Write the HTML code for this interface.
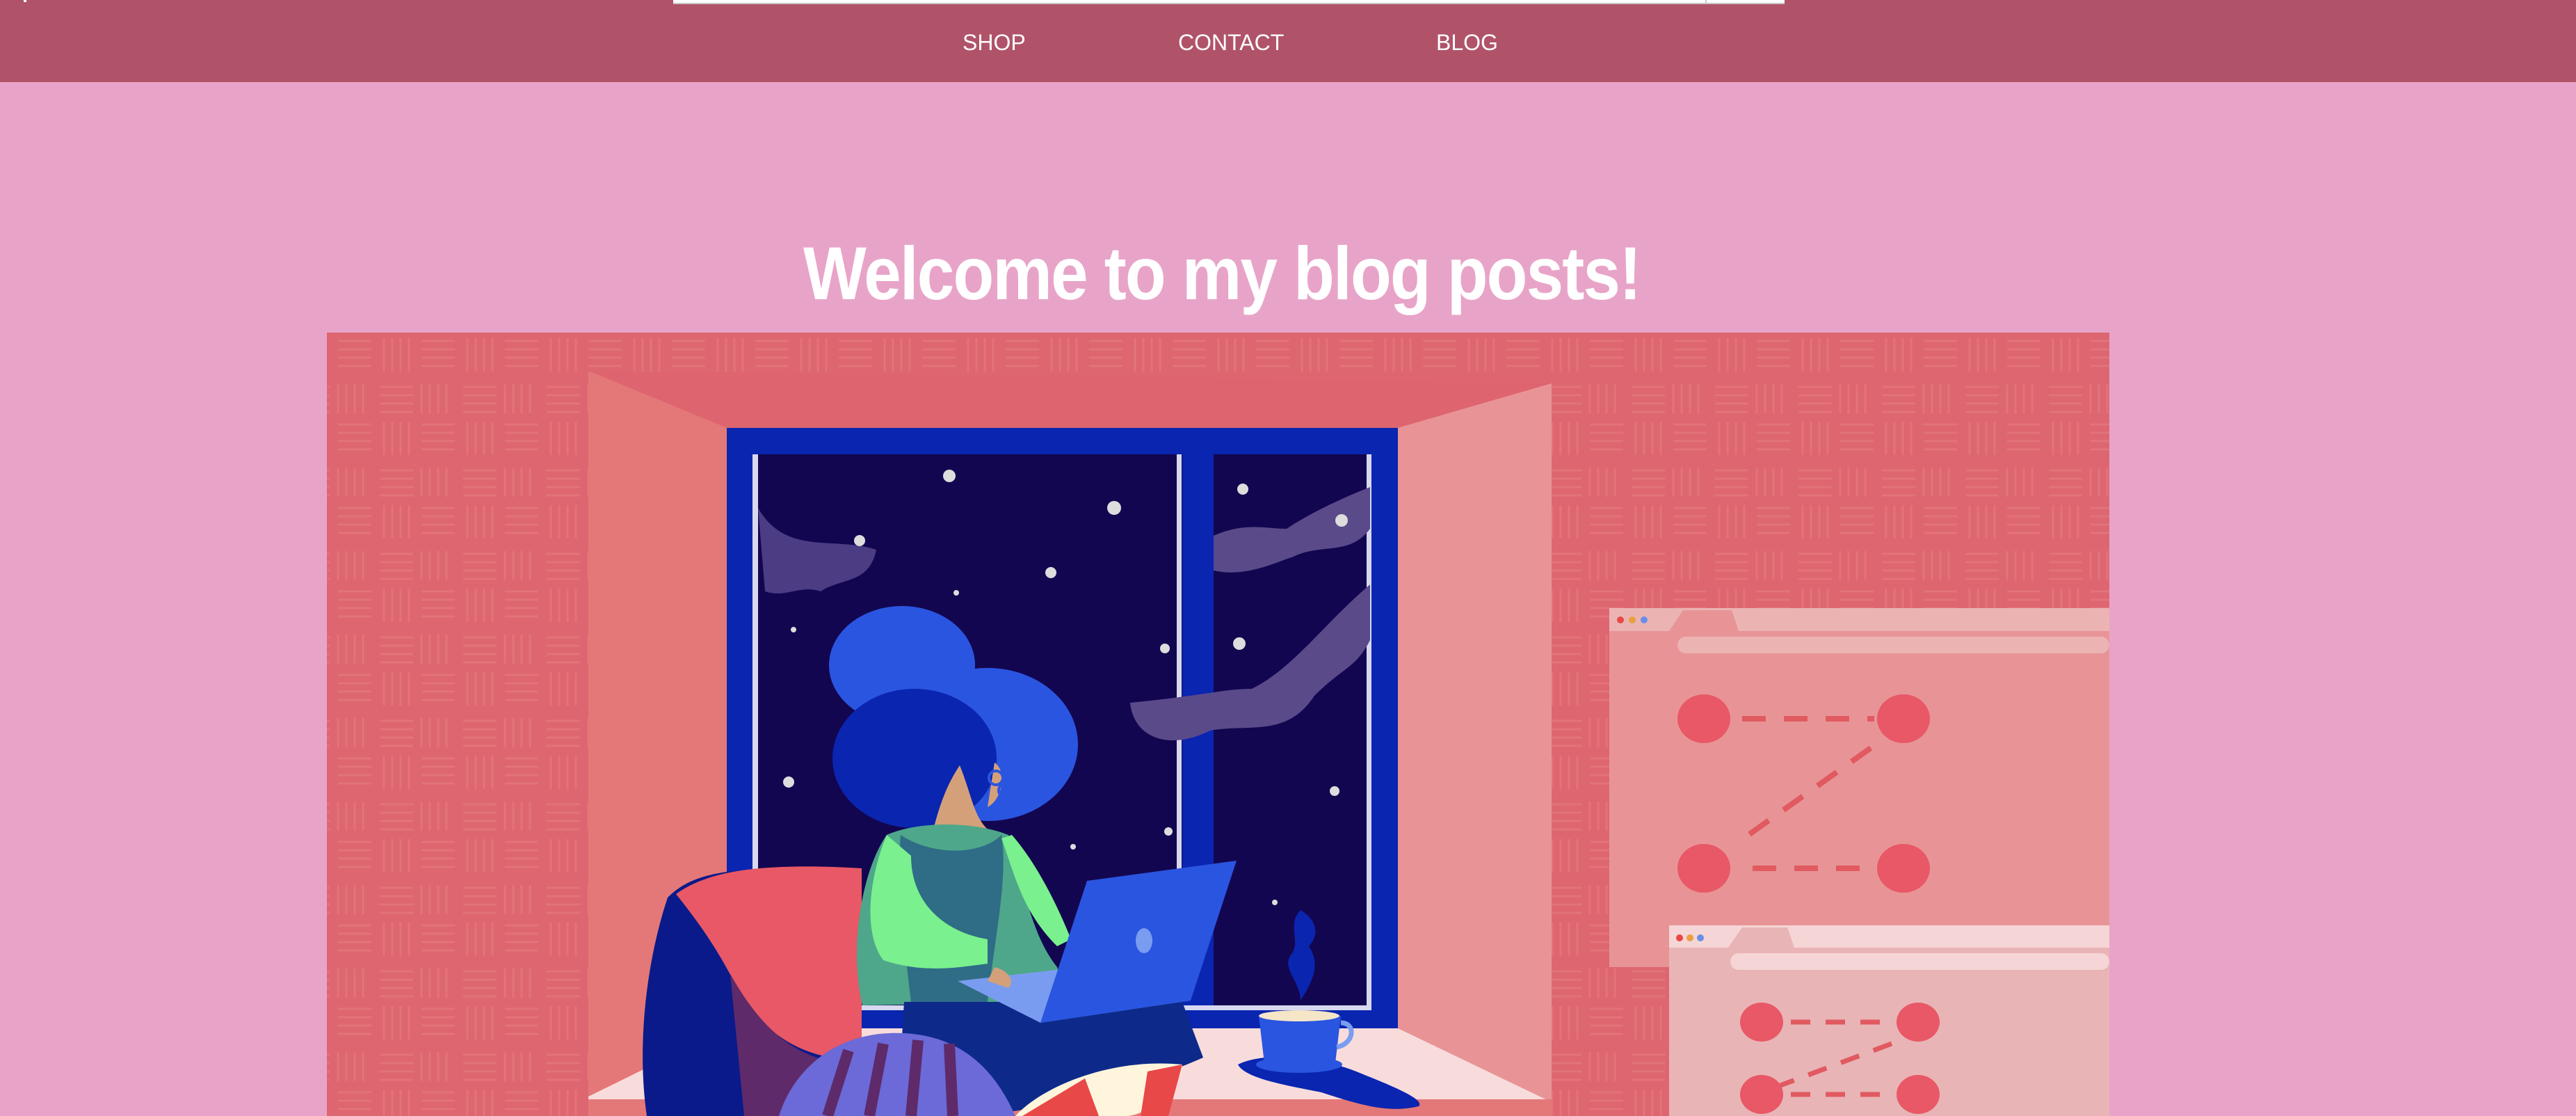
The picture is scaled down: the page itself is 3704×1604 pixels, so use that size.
<!DOCTYPE html>
<html><head><meta charset="utf-8"><style>
html,body{margin:0;padding:0;width:3704px;height:1604px;overflow:hidden;background:#e8a4c8;font-family:"Liberation Sans",sans-serif}
#hdr{position:absolute;left:0;top:0;width:3704px;height:118px;background:#b05369}
.nav{position:absolute;top:43px;color:#fff;font-size:32px}
#h1{position:absolute;left:1155px;top:330px;color:#fff;font-size:108px;font-weight:bold;letter-spacing:-2px;margin:0;white-space:nowrap;transform:scaleX(0.89);transform-origin:0 0}
svg{position:absolute;left:0;top:0}
</style></head><body>
<div id="hdr">
<div style="position:absolute;left:968px;top:0;width:1598px;height:4px;background:#fff;border-bottom:2px solid #c9c9c9"></div>
<div style="position:absolute;left:2452px;top:0;width:2px;height:6px;background:#c9c9c9"></div>
<div style="position:absolute;left:34px;top:0;width:4px;height:3px;background:#fff"></div>
<div class="nav" style="left:1384px">SHOP</div>
<div class="nav" style="left:1694px">CONTACT</div>
<div class="nav" style="left:2065px">BLOG</div>
</div>
<div id="h1">Welcome to my blog posts!</div>
<svg width="3704" height="1604" viewBox="0 0 3704 1604">
<defs>
<pattern id="tx" width="120" height="120" patternUnits="userSpaceOnUse">
<g stroke="#e88585" stroke-width="3" opacity=".45">
<path d="M6 10h48M6 22h48M6 34h48M6 46h48"/>
<path d="M72 6v48M84 6v48M96 6v48M108 6v48"/>
<path d="M6 72v42M18 72v42M30 72v42M42 72v42"/>
<path d="M66 76h48M66 88h48M66 100h48M66 112h48"/>
</g></pattern>
</defs>
<rect x="470" y="478" width="2563" height="1126" fill="#dd6670"/>
<rect x="470" y="478" width="2563" height="1126" fill="url(#tx)"/>
<polygon points="846,533 2231,551 2010,615 1045,615" fill="#de6570"/>
<polygon points="846,533 1045,615 1045,1478 846,1576" fill="#e47878"/>
<polygon points="2010,615 2231,551 2231,1584 2010,1478" fill="#e89496"/>
<polygon points="1045,1478 2010,1478 2231,1584 846,1584 846,1576" fill="#f8dcdc"/>
<rect x="846" y="1580" width="1385" height="24" fill="#e47878"/>
<rect x="1045" y="615" width="965" height="863" fill="#0a25b0"/>
<rect x="1082" y="653" width="890" height="799" fill="#130650"/>
<rect x="1700" y="653" width="45" height="799" fill="#0a25b0"/>
<rect x="1082" y="653" width="8" height="799" fill="#d8d8f0"/>
<rect x="1692" y="653" width="7" height="799" fill="#d8d8f0"/>
<rect x="1965" y="653" width="7" height="799" fill="#d8d8f0"/>
<rect x="1082" y="1445" width="890" height="7" fill="#d8d8f0"/>
<path d="M1090,730 C1130,800 1200,770 1260,790 C1250,840 1210,830 1180,850 C1150,840 1130,860 1100,850 Z" fill="#4b3c84"/>
<path d="M1970,700 C1920,720 1880,740 1850,760 C1820,760 1790,750 1745,770 L1745,820 C1790,830 1830,810 1860,800 C1900,780 1940,800 1970,760 Z" fill="#5a4a8a"/>
<path d="M1970,840 C1900,900 1860,960 1800,990 C1760,990 1730,1000 1625,1010 C1630,1060 1680,1080 1740,1050 C1800,1040 1850,1060 1890,1000 C1930,960 1950,960 1970,920 Z" fill="#5a4a8a"/>
<g fill="#ddd">
<circle cx="1365" cy="684" r="9"/><circle cx="1602" cy="730" r="10"/><circle cx="1236" cy="777" r="8"/><circle cx="1511" cy="823" r="8"/><circle cx="1787" cy="703" r="8"/><circle cx="1929" cy="748" r="9"/><circle cx="1782" cy="925" r="9"/><circle cx="1675" cy="932" r="7"/><circle cx="1134" cy="1124" r="8"/><circle cx="1919" cy="1137" r="7"/><circle cx="1680" cy="1195" r="6"/><circle cx="1375" cy="852" r="4"/><circle cx="1141" cy="905" r="4"/><circle cx="1543" cy="1217" r="4"/><circle cx="1833" cy="1297" r="4"/>
</g>
<path d="M960,1290 C1000,1250 1060,1244 1239,1250 L1239,1604 L930,1604 C915,1500 930,1380 960,1290Z" fill="#0a1a8a"/>
<path d="M972,1285 C1020,1250 1100,1240 1239,1248 L1239,1520 C1160,1530 1090,1480 1060,1420 C1030,1360 1000,1320 972,1285Z" fill="#e85866"/>
<path d="M1050,1400 C1090,1470 1140,1530 1239,1530 L1239,1604 L1070,1604 Z" fill="#5e2a6a"/>
<ellipse cx="1297" cy="956" rx="105" ry="85" fill="#2a55e0"/>
<ellipse cx="1420" cy="1070" rx="130" ry="110" fill="#2a55e0"/>
<ellipse cx="1315" cy="1090" rx="118" ry="100" fill="#0a25b0"/>
<path d="M1380,1100 C1400,1150 1400,1180 1430,1200 L1340,1200 C1350,1160 1360,1130 1380,1100Z" fill="#d4a07a"/>
<path d="M1430,1096 C1450,1110 1440,1150 1420,1160 Z" fill="#d4a07a"/>
<circle cx="1432" cy="1118" r="10" fill="none" stroke="#2a55e0" stroke-width="4"/>
<circle cx="1446" cy="1136" r="10" fill="none" stroke="#2a55e0" stroke-width="4"/>
<path d="M1275,1200 C1320,1180 1400,1180 1450,1200 C1470,1260 1480,1340 1520,1390 L1540,1440 L1240,1445 C1220,1360 1240,1250 1275,1200Z" fill="#4ea78a"/>
<path d="M1295,1200 C1340,1230 1410,1230 1440,1200 C1450,1260 1430,1350 1420,1440 L1310,1440 C1300,1360 1290,1260 1295,1200Z" fill="#2f6c86"/>
<path d="M1275,1200 C1250,1260 1240,1340 1270,1380 C1330,1400 1380,1390 1420,1385 L1420,1350 C1360,1340 1310,1300 1310,1230Z" fill="#7af08e"/>
<path d="M1440,1205 C1460,1260 1470,1310 1520,1360 L1540,1350 C1520,1300 1490,1240 1455,1200Z" fill="#7af08e"/>
<path d="M1300,1440 L1700,1440 L1730,1520 C1640,1560 1500,1600 1380,1604 L1290,1604 Z" fill="#0d2a8a"/>
<path d="M1120,1604 C1140,1540 1200,1480 1300,1485 C1400,1490 1440,1560 1460,1604Z" fill="#6b6ad8"/>
<g stroke="#5e2a6a" stroke-width="16"><path d="M1190,1604 L1220,1510M1250,1604 L1270,1500M1310,1604 L1320,1495M1370,1604 L1365,1500"/></g>
<path d="M1460,1604 C1500,1560 1600,1520 1700,1530 C1700,1560 1650,1604 1620,1604Z" fill="#fff5dc"/>
<path d="M1470,1604 L1560,1550 L1580,1604Z M1650,1540 L1700,1530 L1680,1604 L1640,1604Z" fill="#e84848"/>
<polygon points="1377,1410 1496,1470 1712,1438 1600,1385" fill="#7a9cf0"/>
<polygon points="1496,1470 1563,1266 1778,1237 1712,1438" fill="#2a55e0"/>
<ellipse cx="1645" cy="1352" rx="12" ry="18" fill="#7a9cf0"/>
<path d="M1430,1390 C1450,1395 1460,1410 1450,1420 L1420,1410Z" fill="#d4a07a"/>
<path d="M1870,1308 C1850,1330 1870,1350 1858,1370 C1840,1390 1870,1410 1870,1438 C1895,1400 1895,1380 1882,1360 C1900,1340 1890,1320 1870,1308Z" fill="#0a25b0"/>
<path d="M1780,1530 C1820,1510 1900,1520 1950,1540 C2000,1560 2050,1580 2040,1590 C2000,1600 1960,1590 1900,1570 C1850,1560 1790,1550 1780,1530Z" fill="#0a25b0"/>
<ellipse cx="1868" cy="1530" rx="62" ry="12" fill="#2a55e0"/>
<path d="M1810,1460 L1928,1460 L1920,1528 L1818,1528Z" fill="#2a55e0"/>
<ellipse cx="1868" cy="1460" rx="58" ry="8" fill="#f5e6c8"/>
<path d="M1928,1470 C1950,1470 1948,1500 1922,1505" fill="none" stroke="#7a9cf0" stroke-width="7"/>
<rect x="2314" y="874" width="719" height="516" fill="#e89496"/>
<rect x="2314" y="874" width="719" height="33" fill="#ecb3b3"/>
<polygon points="2400,907 2420,877 2490,877 2500,907" fill="#e89496"/>
<circle cx="2330" cy="891" r="5" fill="#e84848"/><circle cx="2347" cy="891" r="5" fill="#e8a040"/><circle cx="2364" cy="891" r="5" fill="#6a8ee8"/>
<rect x="2412" y="915" width="621" height="24" rx="12" fill="#ecb3b3"/>
<g fill="#e85866"><ellipse cx="2450" cy="1033" rx="38" ry="35"/><ellipse cx="2737" cy="1033" rx="38" ry="35"/><ellipse cx="2450" cy="1248" rx="38" ry="35"/><ellipse cx="2737" cy="1248" rx="38" ry="35"/></g>
<path d="M2505,1033H2695M2520,1248H2690M2690,1075L2500,1210" stroke="#e05a60" stroke-width="8" stroke-dasharray="34,26"/>
<rect x="2400" y="1330" width="633" height="274" fill="#e9b4b6"/>
<rect x="2400" y="1330" width="633" height="32" fill="#f5d5d5"/>
<polygon points="2485,1362 2505,1333 2570,1333 2580,1362" fill="#e9b4b6"/>
<circle cx="2415" cy="1348" r="5" fill="#e84848"/><circle cx="2430" cy="1348" r="5" fill="#e8a040"/><circle cx="2445" cy="1348" r="5" fill="#6a8ee8"/>
<rect x="2488" y="1370" width="545" height="24" rx="12" fill="#f5d5d5"/>
<g fill="#e85866"><ellipse cx="2533" cy="1469" rx="31" ry="28"/><ellipse cx="2758" cy="1469" rx="31" ry="28"/><ellipse cx="2533" cy="1573" rx="31" ry="28"/><ellipse cx="2758" cy="1573" rx="31" ry="28"/></g>
<path d="M2575,1469H2720M2575,1573H2720M2720,1500L2560,1560" stroke="#e05a60" stroke-width="7" stroke-dasharray="28,22"/>
</svg>
</body></html>
